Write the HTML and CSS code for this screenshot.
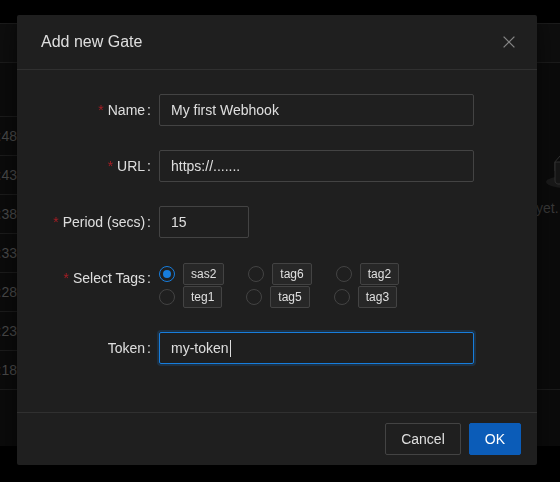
FILE: index.html
```html
<!DOCTYPE html>
<html lang="en">
<head>
<meta charset="utf-8">
<title>Add new Gate</title>
<link rel="stylesheet" href="styles.css">
</head>
<body>
<div class="page">
  <section class="card card-left">
    <div class="card-head"></div>
    <div class="thead"></div>
    <div class="trow"><div class="time"><span>10:15:48</span></div></div>
    <div class="trow"><div class="time"><span>10:15:43</span></div></div>
    <div class="trow"><div class="time"><span>10:15:38</span></div></div>
    <div class="trow"><div class="time"><span>10:15:33</span></div></div>
    <div class="trow"><div class="time"><span>10:15:28</span></div></div>
    <div class="trow"><div class="time"><span>10:15:23</span></div></div>
    <div class="trow"><div class="time"><span>10:15:18</span></div></div>
    <div class="card-foot"></div>
  </section>
  <section class="card card-right">
    <div class="card-head"></div>
    <div class="card-body">
      <svg class="empty-img" width="64" height="41" viewBox="0 0 64 41" aria-hidden="true">
        <g transform="translate(0 1)" fill="none" fill-rule="evenodd">
          <ellipse fill="#1a1a1a" cx="32" cy="33" rx="32" ry="7"/>
          <g fill-rule="nonzero" stroke="#333333">
            <path d="M55 12.76L44.854 1.258C44.367.474 43.656 0 42.907 0H21.093c-.749 0-1.46.474-1.947 1.257L9 12.761V22h46v-9.24z"/>
            <path d="M41.613 15.931c0-1.605.994-2.93 2.227-2.931H55v18.137C55 33.26 53.68 35 52.05 35h-40.1C10.32 35 9 33.259 9 31.137V13h11.16c1.233 0 2.227 1.323 2.227 2.928v.022c0 1.605 1.005 2.901 2.237 2.901h14.752c1.232 0 2.237-1.308 2.237-2.913v-.007z" fill="#161616"/>
          </g>
        </g>
      </svg>
      <p class="empty-text">No gates yet. Add a gate to start.</p>
    </div>
    <div class="card-foot"></div>
  </section>
</div>

<div class="modal-wrap">
  <div class="modal" role="dialog" aria-labelledby="modal-title">
    <div class="modal-header">
      <div class="modal-title" id="modal-title">Add new Gate</div>
      <button class="modal-close" type="button" aria-label="Close">
        <svg width="12" height="12" viewBox="0 0 12 12" aria-hidden="true">
          <path d="M0.6 0.6L11.4 11.4M11.4 0.6L0.6 11.4" stroke="currentColor" stroke-width="1.3" fill="none"/>
        </svg>
      </button>
    </div>
    <div class="modal-body">
      <form class="form">
        <div class="form-item">
          <label class="form-label"><span class="req">*</span>Name<span class="colon">:</span></label>
          <div class="form-control"><input class="input" type="text" value="My first Webhook"></div>
        </div>
        <div class="form-item">
          <label class="form-label"><span class="req">*</span>URL<span class="colon">:</span></label>
          <div class="form-control"><input class="input" type="text" value="https://......."></div>
        </div>
        <div class="form-item">
          <label class="form-label"><span class="req">*</span>Period (secs)<span class="colon">:</span></label>
          <div class="form-control"><input class="input input-short" type="text" value="15"></div>
        </div>
        <div class="form-item">
          <label class="form-label"><span class="req">*</span>Select Tags<span class="colon">:</span></label>
          <div class="form-control">
            <div class="tags">
              <label class="opt"><span class="radio checked"></span><span class="opt-text"><span class="tag">sas2</span></span></label>
              <label class="opt"><span class="radio"></span><span class="opt-text"><span class="tag">tag6</span></span></label>
              <label class="opt"><span class="radio"></span><span class="opt-text"><span class="tag">tag2</span></span></label>
              <label class="opt"><span class="radio"></span><span class="opt-text"><span class="tag">teg1</span></span></label>
              <label class="opt"><span class="radio"></span><span class="opt-text"><span class="tag">tag5</span></span></label>
              <label class="opt"><span class="radio"></span><span class="opt-text"><span class="tag">tag3</span></span></label>
            </div>
          </div>
        </div>
        <div class="form-item">
          <label class="form-label">Token<span class="colon">:</span></label>
          <div class="form-control"><div class="input input-focus">my-token<span class="caret"></span></div></div>
        </div>
      </form>
    </div>
    <div class="modal-footer">
      <button class="btn" type="button">Cancel</button>
      <button class="btn btn-primary" type="button">OK</button>
    </div>
  </div>
</div>
</body>
</html>
```

FILE: styles.css
```css
* { box-sizing: border-box; }

html, body {
  margin: 0;
  width: 560px;
  height: 482px;
  overflow: hidden;
  background: #000;
  font-family: "Liberation Sans", Arial, sans-serif;
  font-size: 14px;
}

/* ---------- background app ---------- */
.page {
  display: flex;
  gap: 10px;
  padding-top: 23px;
  width: 860px;
}

.card {
  display: flex;
  flex-direction: column;
  height: 423px;
  background: #0b0b0b;
  border-top: 1px solid #1c1c1c;
  flex: none;
}

.card-left { width: 290px; }
.card-right { width: 556px; }

.card-head {
  height: 39px;
  background: #0e0e0e;
  border-bottom: 1px solid #1c1c1c;
  flex: none;
}

.thead {
  height: 54px;
  border-bottom: 1px solid #1c1c1c;
  flex: none;
}

.trow {
  height: 39px;
  border-bottom: 1px solid #1c1c1c;
  display: flex;
  align-items: center;
  flex: none;
}

.time {
  width: 17px;
  flex: none;
  direction: rtl;
  white-space: nowrap;
  color: #4a4a4a;
}

.time span {
  display: inline-block;
  direction: ltr;
  unicode-bidi: isolate;
}

.card-foot { flex: 1; }

.card-body {
  height: 327px;
  border-bottom: 1px solid #1c1c1c;
  display: flex;
  flex-direction: column;
  align-items: center;
  padding-top: 85px;
  flex: none;
}

.empty-img { display: block; }

.empty-text {
  margin: 8px 0 0;
  color: #3a3a3a;
  line-height: 22px;
  white-space: nowrap;
}

/* ---------- modal ---------- */
.modal-wrap {
  position: fixed;
  inset: 0;
}

.modal {
  position: absolute;
  left: 17px;
  top: 15px;
  width: 520px;
  background: #1f1f1f;
  border-radius: 2px;
  box-shadow: 0 3px 6px -4px rgba(0,0,0,.48), 0 6px 16px 0 rgba(0,0,0,.32), 0 9px 28px 8px rgba(0,0,0,.2);
  color: rgba(255,255,255,.85);
}

.modal-header {
  display: flex;
  align-items: center;
  justify-content: space-between;
  padding: 16px 22px 16px 24px;
  border-bottom: 1px solid #303030;
}

.modal-title {
  font-size: 16px;
  line-height: 22px;
  font-weight: 500;
  color: rgba(255,255,255,.85);
}

.modal-close {
  display: flex;
  padding: 0;
  border: 0;
  background: none;
  color: rgba(255,255,255,.45);
  cursor: pointer;
}

.modal-body {
  padding: 24px;
}

.form { margin: 0; }

.form-item {
  display: flex;
  margin-bottom: 24px;
}

.form-label {
  flex: 0 0 118px;
  height: 32px;
  line-height: 32px;
  text-align: right;
  white-space: nowrap;
  color: rgba(255,255,255,.85);
}

.req {
  color: #a61d24;
  margin-right: 4px;
}

.colon {
  margin: 0 8px 0 2px;
}

.form-control {
  flex: 0 0 315px;
}

.input {
  display: block;
  width: 100%;
  height: 32px;
  margin: 0;
  padding: 4px 11px;
  border: 1px solid #434343;
  border-radius: 2px;
  background: transparent;
  color: rgba(255,255,255,.85);
  font: 14px/22px "Liberation Sans", Arial, sans-serif;
  outline: none;
}

.input-short { width: 90px; }

.input-focus {
  border-color: #177ddc;
  box-shadow: 0 0 0 2px rgba(23,125,220,.2);
  display: flex;
  align-items: center;
}

.caret {
  display: inline-block;
  width: 1px;
  height: 17px;
  margin-left: 1px;
  background: rgba(255,255,255,.85);
}

.tags {
  display: flex;
  flex-wrap: wrap;
}

.opt {
  display: flex;
  align-items: center;
  height: 23px;
  margin-right: 8px;
}

.radio {
  position: relative;
  width: 16px;
  height: 16px;
  border: 1px solid #434343;
  border-radius: 50%;
  flex: none;
}

.radio.checked { border-color: #177ddc; }

.radio.checked::after {
  content: "";
  position: absolute;
  left: 3px;
  top: 3px;
  width: 8px;
  height: 8px;
  border-radius: 50%;
  background: #177ddc;
}

.opt-text {
  padding: 0 8px;
  display: flex;
}

.tag {
  display: inline-block;
  height: 22px;
  padding: 0 7px;
  margin-right: 8px;
  font-size: 12px;
  line-height: 20px;
  border: 1px solid #434343;
  border-radius: 2px;
  background: rgba(255,255,255,.04);
  color: rgba(255,255,255,.85);
}

.modal-footer {
  display: flex;
  justify-content: flex-end;
  gap: 8px;
  padding: 10px 16px;
  border-top: 1px solid #303030;
}

.btn {
  height: 32px;
  padding: 4px 15px;
  border: 1px solid #434343;
  border-radius: 2px;
  background: transparent;
  color: rgba(255,255,255,.85);
  font: 14px/22px "Liberation Sans", Arial, sans-serif;
  cursor: pointer;
}

.btn-primary {
  border-color: #0b5cb8;
  background: #0b5cb8;
  color: #fff;
}
```
